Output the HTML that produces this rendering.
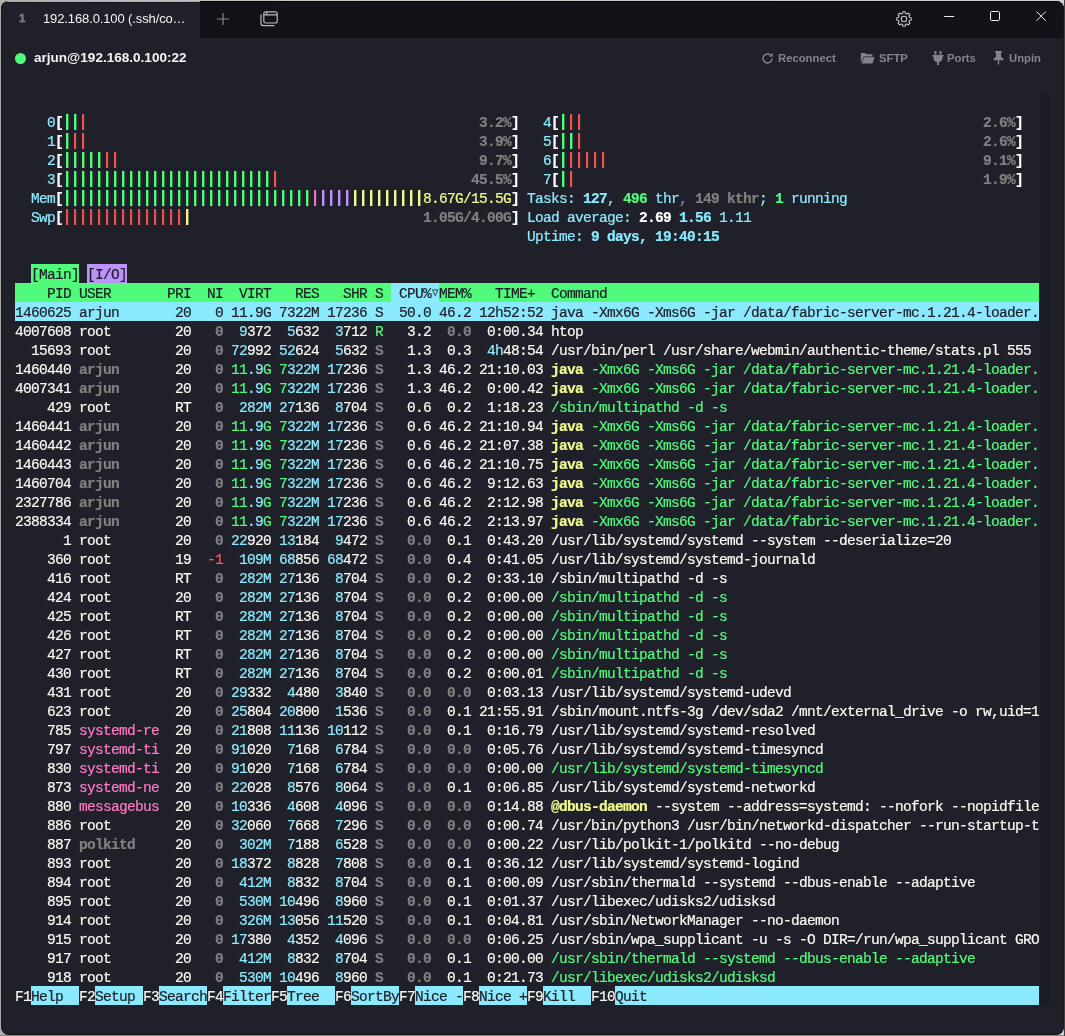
<!DOCTYPE html>
<html><head><meta charset="utf-8"><title>htop</title>
<style>
html,body{margin:0;padding:0;}
body{width:1065px;height:1036px;overflow:hidden;background:linear-gradient(to right,#b0b0a8 0,#b0b0a8 2px,#c4c4c0 200px,#d0d0d0 1064px) ;position:relative;font-family:"Liberation Sans",sans-serif;}
#win{position:absolute;left:1px;top:1px;width:1063px;height:1034px;background:#1f2029;border-radius:8px;overflow:hidden;}
#edge{position:absolute;left:0;top:0;width:1061px;height:1032px;border:1px solid #171822;border-top-color:transparent;border-radius:8px;pointer-events:none;}
#bot{position:absolute;left:0;top:1035px;width:1065px;height:1px;background:#8a8778;}
#rgt{position:absolute;left:1064px;top:0;width:1px;height:1036px;background:#424242;}
#tb:before{content:'';position:absolute;left:199px;top:0;width:864px;height:1px;background:#04040c;}
#tab:before{content:'';position:absolute;left:0;top:0;width:199px;height:1px;background:#b5b850;}
#tab:after{content:'';position:absolute;left:0;top:1px;width:199px;height:1px;background:#15172a;}
#tb{position:absolute;left:0;top:0;width:1063px;height:37px;background:#121218;}
#tab{position:absolute;left:0;top:0;width:199px;height:37px;background:#1f2029;}
#tab .n{will-change:transform;position:absolute;left:18px;top:11px;font-size:11.5px;font-weight:bold;color:#7c7d84;-webkit-text-stroke:0.4px;}
#tab .t{will-change:transform;position:absolute;left:42px;top:10px;font-size:13px;letter-spacing:-0.12px;color:#f4f4f4;white-space:pre;}
.ico{position:absolute;}
#cb{position:absolute;left:0;top:37px;width:1063px;height:40px;}
#dot{position:absolute;left:14px;top:15px;width:11px;height:11px;border-radius:50%;background:#50fa7b;}
#host{will-change:transform;position:absolute;left:33px;top:12px;font-size:13.55px;font-weight:bold;color:#f4f4f4;white-space:pre;}
.act{will-change:transform;position:absolute;top:14px;font-size:11.3px;font-weight:bold;color:#84858b;white-space:pre;}
#term{-webkit-text-stroke:0.22px;will-change:transform;position:absolute;left:14px;top:92px;width:1024px;height:912px;font-family:"Liberation Mono",monospace;font-size:14.5px;letter-spacing:-0.7022px;line-height:22px;color:#f8f8f2;}
.r{position:absolute;left:0;height:19px;width:1024px;white-space:pre;overflow:hidden;}
.r span{display:inline-block;height:19px;vertical-align:top;}
.c{color:#8be9fd}.g{color:#50fa7b}.rd{color:#ff5555}.p{color:#ff79c6}.v{color:#bd93f9}.y{color:#f1fa8c}
.k{color:#808080;font-weight:bold}
.B{font-weight:bold}
.W{color:#ffffff;font-weight:bold}
.hg{background:#50fa7b;color:#1f2029}
.hc{background:#8be9fd;color:#1f2029}
.sel{background:#8be9fd;color:#1f2029}
.fk{background:#8be9fd;color:#1f2029}
.tabm{background:#50fa7b;color:#1f2029}
.tabi{background:#bd93f9;color:#1f2029}
i.b{display:inline-block;height:16px;margin-top:2px;vertical-align:top;background-repeat:repeat-x;background-size:8px 16px;}
i.b.g{background-image:linear-gradient(to right,transparent 3px,rgb(80,250,123) 3px,rgb(80,250,123) 5px,rgba(80,250,123,.4) 5px,rgba(80,250,123,.4) 6px,transparent 6px);}
i.b.rd{background-image:linear-gradient(to right,transparent 3px,rgb(240,80,80) 3px,rgb(240,80,80) 5px,rgba(255,85,85,.15) 5px,rgba(255,85,85,.15) 6px,transparent 6px);}
i.b.p{background-image:linear-gradient(to right,transparent 3px,rgb(240,112,186) 3px,rgb(240,112,186) 5px,rgba(255,121,198,.15) 5px,rgba(255,121,198,.15) 6px,transparent 6px);}
i.b.v{background-image:linear-gradient(to right,transparent 3px,rgb(189,147,249) 3px,rgb(189,147,249) 5px,rgba(189,147,249,.4) 5px,rgba(189,147,249,.4) 6px,transparent 6px);}
i.b.y{background-image:linear-gradient(to right,transparent 3px,rgb(241,250,140) 3px,rgb(241,250,140) 5px,rgba(241,250,140,.4) 5px,rgba(241,250,140,.4) 6px,transparent 6px);}
#sb{position:absolute;left:1039px;top:92px;width:10px;height:912px;background:#1b1c25;}

</style></head>
<body>
<div id="bot"></div><div id="rgt"></div>
<div id="win">
<div id="tb">
  <div id="tab"><span class="n">1</span><span class="t">192.168.0.100 (.ssh/co…</span></div>
  <svg class="ico" style="left:214px;top:10px" width="16" height="16" viewBox="0 0 16 16"><path d="M8 1.900v12.200M1.900 8h12.200" stroke="#85868c" stroke-width="1.200" fill="none"/></svg>
  <svg class="ico" style="left:258px;top:8px" width="20" height="20" viewBox="0 0 20 20" fill="none" stroke="#b9babf" stroke-width="1.200"><rect x="4.800" y="2.800" width="13.400" height="11.200" rx="2"/><path d="M4.800 5.800h13.400M7.800 2.800v3"/><path d="M2 5.800v8.300a2.600 2.600 0 0 0 2.600 2.600h10.300" stroke-linecap="round"/></svg>
  <svg class="ico" style="left:895px;top:10px" width="16" height="16" viewBox="0 0 16 16" fill="none" stroke="#c9c9cd" stroke-width="1.050" stroke-linejoin="round"><circle cx="8" cy="8" r="2.700"/><path d="M6.57 2.48L6.91 0.68L9.09 0.68L9.43 2.48L10.89 3.09L12.40 2.05L13.95 3.60L12.91 5.11L13.52 6.57L15.32 6.91L15.32 9.09L13.52 9.43L12.91 10.89L13.95 12.40L12.40 13.95L10.89 12.91L9.43 13.52L9.09 15.32L6.91 15.32L6.57 13.52L5.11 12.91L3.60 13.95L2.05 12.40L3.09 10.89L2.48 9.43L0.68 9.09L0.68 6.91L2.48 6.57L3.09 5.11L2.05 3.60L3.60 2.05L5.11 3.09z"/></svg>
  <svg class="ico" style="left:942px;top:9px" width="14" height="14" viewBox="0 0 14 14"><path d="M1.200 6.500h10" stroke="#f0f0f0" stroke-width="1"/></svg>
  <svg class="ico" style="left:988px;top:9px" width="14" height="14" viewBox="0 0 14 14"><rect x="1.500" y="1.500" width="9" height="9" rx="1.200" stroke="#f0f0f0" stroke-width="1" fill="none"/></svg>
  <svg class="ico" style="left:1034px;top:9px" width="14" height="14" viewBox="0 0 14 14"><path d="M1.500 1.500l9.300 9.300M10.800 1.500l-9.300 9.300" stroke="#f0f0f0" stroke-width="1"/></svg>
</div>
<div id="cb">
  <div id="dot"></div>
  <div id="host">arjun@192.168.0.100:22</div>
  <svg class="ico" style="left:760px;top:14px" width="13" height="13" viewBox="0 0 16 16" fill="none" stroke="#84858b" stroke-width="1.800"><path d="M13.500 8a5.500 5.500 0 1 1-1.800-4.100"/><path d="M14 1.500v3.800h-3.800" stroke-linejoin="round" fill="#84858b" stroke-width="0.800"/></svg>
  <div class="act" style="left:777px">Reconnect</div>
  <svg class="ico" style="left:859px;top:14px" width="15" height="13" viewBox="0 0 18 14" fill="#84858b"><path d="M1 1.500C1 .900 1.400.500 2 .500h4l1.500 1.500H14c.600 0 1 .400 1 1v1.500H4.500L2 10.500 1 12z"/><path d="M4.800 5.500H17.500l-2.500 7.500H2z"/></svg>
  <div class="act" style="left:878px">SFTP</div>
  <svg class="ico" style="left:931px;top:13px" width="12" height="14" viewBox="0 0 12 14" fill="#84858b"><path d="M2.500 0h2v3.500h-2zM7.500 0h2v3.500h-2zM.500 4h11v1.500h-1V7a4 4 0 0 1-3.500 3.900V14h-2v-3.100A4 4 0 0 1 1.500 7V5.500h-1z"/></svg>
  <div class="act" style="left:946px">Ports</div>
  <svg class="ico" style="left:992px;top:13px" width="11" height="14" viewBox="0 0 11 14" fill="#84858b"><path d="M2 0h7v1.500H8v4l2.500 2.500v1.300H6.200V13l-.700 1-.700-1V9.300H.500V8L3 5.500v-4H2z"/></svg>
  <div class="act" style="left:1007.7px">Unpin</div>
</div>

<div id="term">
<div class="r" style="top:19px">  <span class="c">  0</span><span class="W">[</span><i class="b g" style="width:16px"></i><i class="b rd" style="width:8px"></i>                                                 <span class="k">3.2%</span><span class="W">]</span> <span class="c">  4</span><span class="W">[</span><i class="b g" style="width:8px"></i><i class="b rd" style="width:16px"></i>                                                  <span class="k">2.6%</span><span class="W">]</span></div>
<div class="r" style="top:38px">  <span class="c">  1</span><span class="W">[</span><i class="b g" style="width:8px"></i><i class="b rd" style="width:16px"></i>                                                 <span class="k">3.9%</span><span class="W">]</span> <span class="c">  5</span><span class="W">[</span><i class="b g" style="width:16px"></i><i class="b rd" style="width:8px"></i>                                                  <span class="k">2.6%</span><span class="W">]</span></div>
<div class="r" style="top:57px">  <span class="c">  2</span><span class="W">[</span><i class="b g" style="width:40px"></i><i class="b rd" style="width:16px"></i>                                             <span class="k">9.7%</span><span class="W">]</span> <span class="c">  6</span><span class="W">[</span><i class="b g" style="width:8px"></i><i class="b rd" style="width:40px"></i>                                               <span class="k">9.1%</span><span class="W">]</span></div>
<div class="r" style="top:76px">  <span class="c">  3</span><span class="W">[</span><i class="b g" style="width:208px"></i><i class="b rd" style="width:8px"></i>                        <span class="k">45.5%</span><span class="W">]</span> <span class="c">  7</span><span class="W">[</span><i class="b g" style="width:8px"></i><i class="b rd" style="width:8px"></i>                                                   <span class="k">1.9%</span><span class="W">]</span></div>
<div class="r" style="top:95px">  <span class="c">Mem</span><span class="W">[</span><i class="b g" style="width:248px"></i><i class="b p" style="width:8px"></i><i class="b v" style="width:32px"></i><i class="b y" style="width:72px"></i><span class="y">8.67G/15.5G</span><span class="W">]</span> <span class="c">Tasks: </span><span class="c B">127</span><span class="c">, </span><span class="g B">496</span><span class="c"> thr</span><span class="k">, 149 kthr</span><span class="c">; </span><span class="g B">1</span><span class="c"> running</span></div>
<div class="r" style="top:114px">  <span class="c">Swp</span><span class="W">[</span><i class="b rd" style="width:120px"></i><i class="b y" style="width:8px"></i>                             <span class="k">1.05G/4.00G</span><span class="W">]</span> <span class="c">Load average: </span><span class="W">2.69 </span><span class="c B">1.56 </span><span class="c">1.11</span></div>
<div class="r" style="top:133px">                                                                <span class="c">Uptime: </span><span class="c B">9 days, 19:40:15</span></div>
<div class="r" style="top:171px">  <span class="tabm">[Main]</span> <span class="tabi">[I/O]</span></div>
<div class="r" style="top:190px"><span class="hg">    PID USER       PRI  NI  VIRT   RES   SHR S </span><span class="hc"> CPU%<svg width="8" height="19" viewBox="0 0 8 19" style="vertical-align:top"><path d="M1.500 6.900h5.400L4.200 12.700z" fill="none" stroke="#2a3040" stroke-width=".9"/></svg></span><span class="hg">MEM%   TIME+  Command                                                      </span></div>
<div class="r" style="top:209px"><span class="sel">1460625 arjun       20   0 11.9G 7322M 17236 S  50.0 46.2 12h52:52 java -Xmx6G -Xms6G -jar /data/fabric-server-mc.1.21.4-loader.</span></div>
<div class="r" style="top:228px">4007608 root        20   <span class="k">0</span>  <span class="c">9</span>372  <span class="c">5</span>632  <span class="c">3</span>712 <span class="g">R</span>   3.2 <span class="k"> 0.0</span>  0:00.34 htop</div>
<div class="r" style="top:247px">  15693 root        20   <span class="k">0</span> <span class="c">72</span>992 <span class="c">52</span>624  <span class="c">5</span>632 <span class="k">S</span>   1.3  0.3  <span class="c">4h</span>48:54 /usr/bin/perl /usr/share/webmin/authentic-theme/stats.pl 555</div>
<div class="r" style="top:266px">1460440 <span class="k">arjun     </span>  20   <span class="k">0</span> <span class="g">11</span><span class="c">.9</span><span class="g">G</span> <span class="g">7</span><span class="c">322M</span> <span class="c">17</span>236 <span class="k">S</span>   1.3 46.2 21:10.03 <span class="y B">java</span><span class="g"> -Xmx6G -Xms6G -jar /data/fabric-server-mc.1.21.4-loader.</span></div>
<div class="r" style="top:285px">4007341 <span class="k">arjun     </span>  20   <span class="k">0</span> <span class="g">11</span><span class="c">.9</span><span class="g">G</span> <span class="g">7</span><span class="c">322M</span> <span class="c">17</span>236 <span class="k">S</span>   1.3 46.2  0:00.42 <span class="y B">java</span><span class="g"> -Xmx6G -Xms6G -jar /data/fabric-server-mc.1.21.4-loader.</span></div>
<div class="r" style="top:304px">    429 root        RT   <span class="k">0</span>  <span class="c">282M</span> <span class="c">27</span>136  <span class="c">8</span>704 <span class="k">S</span>   0.6  0.2  1:18.23 <span class="g">/sbin/multipathd -d -s</span></div>
<div class="r" style="top:323px">1460441 <span class="k">arjun     </span>  20   <span class="k">0</span> <span class="g">11</span><span class="c">.9</span><span class="g">G</span> <span class="g">7</span><span class="c">322M</span> <span class="c">17</span>236 <span class="k">S</span>   0.6 46.2 21:10.94 <span class="y B">java</span><span class="g"> -Xmx6G -Xms6G -jar /data/fabric-server-mc.1.21.4-loader.</span></div>
<div class="r" style="top:342px">1460442 <span class="k">arjun     </span>  20   <span class="k">0</span> <span class="g">11</span><span class="c">.9</span><span class="g">G</span> <span class="g">7</span><span class="c">322M</span> <span class="c">17</span>236 <span class="k">S</span>   0.6 46.2 21:07.38 <span class="y B">java</span><span class="g"> -Xmx6G -Xms6G -jar /data/fabric-server-mc.1.21.4-loader.</span></div>
<div class="r" style="top:361px">1460443 <span class="k">arjun     </span>  20   <span class="k">0</span> <span class="g">11</span><span class="c">.9</span><span class="g">G</span> <span class="g">7</span><span class="c">322M</span> <span class="c">17</span>236 <span class="k">S</span>   0.6 46.2 21:10.75 <span class="y B">java</span><span class="g"> -Xmx6G -Xms6G -jar /data/fabric-server-mc.1.21.4-loader.</span></div>
<div class="r" style="top:380px">1460704 <span class="k">arjun     </span>  20   <span class="k">0</span> <span class="g">11</span><span class="c">.9</span><span class="g">G</span> <span class="g">7</span><span class="c">322M</span> <span class="c">17</span>236 <span class="k">S</span>   0.6 46.2  9:12.63 <span class="y B">java</span><span class="g"> -Xmx6G -Xms6G -jar /data/fabric-server-mc.1.21.4-loader.</span></div>
<div class="r" style="top:399px">2327786 <span class="k">arjun     </span>  20   <span class="k">0</span> <span class="g">11</span><span class="c">.9</span><span class="g">G</span> <span class="g">7</span><span class="c">322M</span> <span class="c">17</span>236 <span class="k">S</span>   0.6 46.2  2:12.98 <span class="y B">java</span><span class="g"> -Xmx6G -Xms6G -jar /data/fabric-server-mc.1.21.4-loader.</span></div>
<div class="r" style="top:418px">2388334 <span class="k">arjun     </span>  20   <span class="k">0</span> <span class="g">11</span><span class="c">.9</span><span class="g">G</span> <span class="g">7</span><span class="c">322M</span> <span class="c">17</span>236 <span class="k">S</span>   0.6 46.2  2:13.97 <span class="y B">java</span><span class="g"> -Xmx6G -Xms6G -jar /data/fabric-server-mc.1.21.4-loader.</span></div>
<div class="r" style="top:437px">      1 root        20   <span class="k">0</span> <span class="c">22</span>920 <span class="c">13</span>184  <span class="c">9</span>472 <span class="k">S</span>   <span class="k">0.0</span>  0.1  0:43.20 /usr/lib/systemd/systemd --system --deserialize=20</div>
<div class="r" style="top:456px">    360 root        19  <span class="rd">-1</span>  <span class="c">109M</span> <span class="c">68</span>856 <span class="c">68</span>472 <span class="k">S</span>   <span class="k">0.0</span>  0.4  0:41.05 /usr/lib/systemd/systemd-journald</div>
<div class="r" style="top:475px">    416 root        RT   <span class="k">0</span>  <span class="c">282M</span> <span class="c">27</span>136  <span class="c">8</span>704 <span class="k">S</span>   <span class="k">0.0</span>  0.2  0:33.10 /sbin/multipathd -d -s</div>
<div class="r" style="top:494px">    424 root        20   <span class="k">0</span>  <span class="c">282M</span> <span class="c">27</span>136  <span class="c">8</span>704 <span class="k">S</span>   <span class="k">0.0</span>  0.2  0:00.00 <span class="g">/sbin/multipathd -d -s</span></div>
<div class="r" style="top:513px">    425 root        RT   <span class="k">0</span>  <span class="c">282M</span> <span class="c">27</span>136  <span class="c">8</span>704 <span class="k">S</span>   <span class="k">0.0</span>  0.2  0:00.00 <span class="g">/sbin/multipathd -d -s</span></div>
<div class="r" style="top:532px">    426 root        RT   <span class="k">0</span>  <span class="c">282M</span> <span class="c">27</span>136  <span class="c">8</span>704 <span class="k">S</span>   <span class="k">0.0</span>  0.2  0:00.00 <span class="g">/sbin/multipathd -d -s</span></div>
<div class="r" style="top:551px">    427 root        RT   <span class="k">0</span>  <span class="c">282M</span> <span class="c">27</span>136  <span class="c">8</span>704 <span class="k">S</span>   <span class="k">0.0</span>  0.2  0:00.00 <span class="g">/sbin/multipathd -d -s</span></div>
<div class="r" style="top:570px">    430 root        RT   <span class="k">0</span>  <span class="c">282M</span> <span class="c">27</span>136  <span class="c">8</span>704 <span class="k">S</span>   <span class="k">0.0</span>  0.2  0:00.01 <span class="g">/sbin/multipathd -d -s</span></div>
<div class="r" style="top:589px">    431 root        20   <span class="k">0</span> <span class="c">29</span>332  <span class="c">4</span>480  <span class="c">3</span>840 <span class="k">S</span>   <span class="k">0.0</span> <span class="k"> 0.0</span>  0:03.13 /usr/lib/systemd/systemd-udevd</div>
<div class="r" style="top:608px">    623 root        20   <span class="k">0</span> <span class="c">25</span>804 <span class="c">20</span>800  <span class="c">1</span>536 <span class="k">S</span>   <span class="k">0.0</span>  0.1 21:55.91 /sbin/mount.ntfs-3g /dev/sda2 /mnt/external_drive -o rw,uid=1</div>
<div class="r" style="top:627px">    785 <span class="p">systemd-re</span>  20   <span class="k">0</span> <span class="c">21</span>808 <span class="c">11</span>136 <span class="c">10</span>112 <span class="k">S</span>   <span class="k">0.0</span>  0.1  0:16.79 /usr/lib/systemd/systemd-resolved</div>
<div class="r" style="top:646px">    797 <span class="p">systemd-ti</span>  20   <span class="k">0</span> <span class="c">91</span>020  <span class="c">7</span>168  <span class="c">6</span>784 <span class="k">S</span>   <span class="k">0.0</span> <span class="k"> 0.0</span>  0:05.76 /usr/lib/systemd/systemd-timesyncd</div>
<div class="r" style="top:665px">    830 <span class="p">systemd-ti</span>  20   <span class="k">0</span> <span class="c">91</span>020  <span class="c">7</span>168  <span class="c">6</span>784 <span class="k">S</span>   <span class="k">0.0</span> <span class="k"> 0.0</span>  0:00.00 <span class="g">/usr/lib/systemd/systemd-timesyncd</span></div>
<div class="r" style="top:684px">    873 <span class="p">systemd-ne</span>  20   <span class="k">0</span> <span class="c">22</span>028  <span class="c">8</span>576  <span class="c">8</span>064 <span class="k">S</span>   <span class="k">0.0</span>  0.1  0:06.85 /usr/lib/systemd/systemd-networkd</div>
<div class="r" style="top:703px">    880 <span class="p">messagebus</span>  20   <span class="k">0</span> <span class="c">10</span>336  <span class="c">4</span>608  <span class="c">4</span>096 <span class="k">S</span>   <span class="k">0.0</span> <span class="k"> 0.0</span>  0:14.88 <span class="y B">@dbus-daemon</span> --system --address=systemd: --nofork --nopidfile</div>
<div class="r" style="top:722px">    886 root        20   <span class="k">0</span> <span class="c">32</span>060  <span class="c">7</span>668  <span class="c">7</span>296 <span class="k">S</span>   <span class="k">0.0</span> <span class="k"> 0.0</span>  0:00.74 /usr/bin/python3 /usr/bin/networkd-dispatcher --run-startup-t</div>
<div class="r" style="top:741px">    887 <span class="k">polkitd   </span>  20   <span class="k">0</span>  <span class="c">302M</span>  <span class="c">7</span>188  <span class="c">6</span>528 <span class="k">S</span>   <span class="k">0.0</span> <span class="k"> 0.0</span>  0:00.22 /usr/lib/polkit-1/polkitd --no-debug</div>
<div class="r" style="top:760px">    893 root        20   <span class="k">0</span> <span class="c">18</span>372  <span class="c">8</span>828  <span class="c">7</span>808 <span class="k">S</span>   <span class="k">0.0</span>  0.1  0:36.12 /usr/lib/systemd/systemd-logind</div>
<div class="r" style="top:779px">    894 root        20   <span class="k">0</span>  <span class="c">412M</span>  <span class="c">8</span>832  <span class="c">8</span>704 <span class="k">S</span>   <span class="k">0.0</span>  0.1  0:00.09 /usr/sbin/thermald --systemd --dbus-enable --adaptive</div>
<div class="r" style="top:798px">    895 root        20   <span class="k">0</span>  <span class="c">530M</span> <span class="c">10</span>496  <span class="c">8</span>960 <span class="k">S</span>   <span class="k">0.0</span>  0.1  0:01.37 /usr/libexec/udisks2/udisksd</div>
<div class="r" style="top:817px">    914 root        20   <span class="k">0</span>  <span class="c">326M</span> <span class="c">13</span>056 <span class="c">11</span>520 <span class="k">S</span>   <span class="k">0.0</span>  0.1  0:04.81 /usr/sbin/NetworkManager --no-daemon</div>
<div class="r" style="top:836px">    915 root        20   <span class="k">0</span> <span class="c">17</span>380  <span class="c">4</span>352  <span class="c">4</span>096 <span class="k">S</span>   <span class="k">0.0</span> <span class="k"> 0.0</span>  0:06.25 /usr/sbin/wpa_supplicant -u -s -O DIR=/run/wpa_supplicant GRO</div>
<div class="r" style="top:855px">    917 root        20   <span class="k">0</span>  <span class="c">412M</span>  <span class="c">8</span>832  <span class="c">8</span>704 <span class="k">S</span>   <span class="k">0.0</span>  0.1  0:00.00 <span class="g">/usr/sbin/thermald --systemd --dbus-enable --adaptive</span></div>
<div class="r" style="top:874px">    918 root        20   <span class="k">0</span>  <span class="c">530M</span> <span class="c">10</span>496  <span class="c">8</span>960 <span class="k">S</span>   <span class="k">0.0</span>  0.1  0:21.73 <span class="g">/usr/libexec/udisks2/udisksd</span></div>
<div class="r" style="top:893px">F1<span class="fk">Help  </span>F2<span class="fk">Setup </span>F3<span class="fk">Search</span>F4<span class="fk">Filter</span>F5<span class="fk">Tree  </span>F6<span class="fk">SortBy</span>F7<span class="fk">Nice -</span>F8<span class="fk">Nice +</span>F9<span class="fk">Kill  </span>F10<span class="fk">Quit                                                 </span></div>
</div>
<div id="sb"></div>
<div id="edge"></div>
</div>
</body></html>
